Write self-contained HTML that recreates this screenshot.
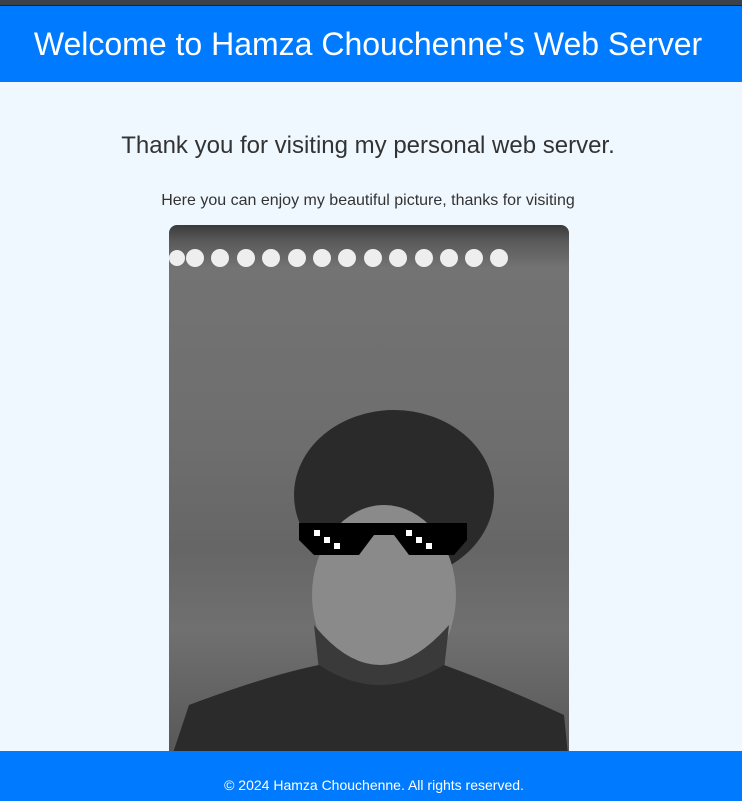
<!DOCTYPE html>
<html><head><style>
html,body{margin:0;width:742px;height:801px;overflow:hidden}
body{background:#f0f8ff;font-family:"Liberation Sans",sans-serif;position:relative}
.top{height:5px;background:#3d4149;border-bottom:1px solid #222}
header{position:absolute;top:6px;left:-3px;right:3px;height:76px;background:#007bff;color:#fff;text-align:center;font-size:32px;line-height:76px}
.hb{position:absolute;top:6px;left:0;right:0;height:76px;background:#007bff}
h2{position:absolute;top:132px;left:-3px;right:3px;margin:0;text-align:center;font-weight:normal;font-size:24px;color:#333}
p{position:absolute;top:192px;left:-3px;right:3px;margin:0;text-align:center;font-size:16px;color:#333}
.pic{position:absolute;left:169px;top:225px;width:400px;height:540px;border-radius:8px;overflow:hidden;background:linear-gradient(180deg,#3a3a3a 0%,#5a5a5a 3%,#737373 8%,#6e6e6e 40%,#666 60%,#707070 75%,#555 100%)}
footer{position:absolute;top:751px;left:3px;right:-3px;height:50px;color:#fff;text-align:center;font-size:14px;line-height:68px}
.fb{position:absolute;top:751px;left:0;right:0;height:50px;background:#007bff}
</style></head><body>
<div class="top"></div>
<div class="hb"></div>
<header>Welcome to Hamza Chouchenne's Web Server</header>
<h2>Thank you for visiting my personal web server.</h2>
<p>Here you can enjoy my beautiful picture, thanks for visiting</p>
<div class="pic"><svg width="400" height="540">
<g fill="#eee"><circle cx="8" cy="33" r="8"/><circle cx="26" cy="33" r="9"/><circle cx="51" cy="33" r="9"/><circle cx="77" cy="33" r="9"/><circle cx="102" cy="33" r="9"/><circle cx="128" cy="33" r="9"/><circle cx="153" cy="33" r="9"/><circle cx="178" cy="33" r="9"/><circle cx="204" cy="33" r="9"/><circle cx="229" cy="33" r="9"/><circle cx="255" cy="33" r="9"/><circle cx="280" cy="33" r="9"/><circle cx="305" cy="33" r="9"/><circle cx="330" cy="33" r="9"/></g>
<ellipse cx="225" cy="270" rx="100" ry="85" fill="#2a2a2a"/>
<ellipse cx="215" cy="370" rx="72" ry="90" fill="#8a8a8a"/>
<path d="M145 400 Q210 480 280 400 L275 445 Q210 500 150 445Z" fill="#3a3a3a"/>
<path d="M0 540 L20 480 Q100 450 150 440 Q210 480 275 440 Q330 460 395 490 L400 540Z" fill="#2b2b2b"/>
<path d="M130 298 H298 V315 L285 330 H240 L225 310 H205 L190 330 H145 L130 315Z" fill="#000"/>
<g fill="#fff"><rect x="145" y="305" width="6" height="6"/><rect x="155" y="312" width="6" height="6"/><rect x="165" y="318" width="6" height="6"/><rect x="237" y="305" width="6" height="6"/><rect x="247" y="312" width="6" height="6"/><rect x="257" y="318" width="6" height="6"/></g>
</svg></div>
<div class="fb"></div>
<footer>© 2024 Hamza Chouchenne. All rights reserved.</footer>
</body></html>
